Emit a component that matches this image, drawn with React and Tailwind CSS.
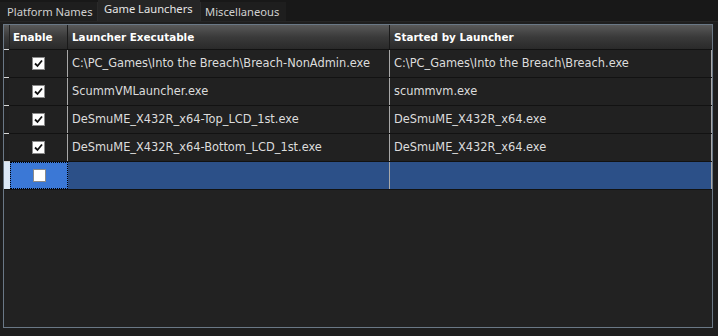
import React from "react";

const rows = [
  ["C:\\PC_Games\\Into the Breach\\Breach-NonAdmin.exe", "C:\\PC_Games\\Into the Breach\\Breach.exe"],
  ["ScummVMLauncher.exe", "scummvm.exe"],
  ["DeSmuME_X432R_x64-Top_LCD_1st.exe", "DeSmuME_X432R_x64.exe"],
  ["DeSmuME_X432R_x64-Bottom_LCD_1st.exe", "DeSmuME_X432R_x64.exe"],
];

function Check({ checked }) {
  return (
    <div className="w-[13px] h-[13px] bg-white border border-[#8a8a8a] flex items-center justify-center">
      {checked && (
        <svg width="9" height="9" viewBox="0 0 9 9">
          <path d="M1 4.5 L3.5 7 L8 1.5" stroke="#111" strokeWidth="1.8" fill="none" />
        </svg>
      )}
    </div>
  );
}

export default function App() {
  const font = { fontFamily: "'DejaVu Sans', Verdana, sans-serif" };
  return (
    <div className="w-[718px] h-[336px] bg-[#1b1b1b] overflow-hidden flex flex-col" style={font}>
      {/* Tabs */}
      <div className="h-[21px] flex items-end bg-[#181818] text-[11.2px] whitespace-nowrap" style={{ fontFamily: "'Noto Sans', sans-serif" }}>
        <div className="h-[19px] w-[98px] bg-[#1e1e1e] border-r border-[#2a2a2a] text-[#d0d0d0] pl-[7px] flex items-center leading-none">Platform Names</div>
        <div className="h-[21px] w-[102px] bg-[#252525] text-[#e6e6e6] pl-[6px] pb-[3px] flex items-center leading-none">Game Launchers</div>
        <div className="h-[19px] w-[86px] bg-[#1e1e1e] border-l border-[#2a2a2a] text-[#d0d0d0] pl-[4px] flex items-center leading-none">Miscellaneous</div>
      </div>
      {/* Panel */}
      <div className="flex-1 bg-[#1e1e1e] border-t border-[#262626] pt-[2px] pl-[3px] pr-[5px] pb-[8px] flex">
        <div className="flex-1 border border-[#6a7886] bg-[#222222] flex flex-col">
          {/* Header */}
          <div className="h-[24px] flex bg-gradient-to-b from-[#5a5a5a] via-[#3a3a3a] to-[#2a2a2a] text-white font-bold text-[10.4px] whitespace-nowrap">
            <div className="w-[6px] border-r border-[#222]" />
            <div className="w-[58px] border-r border-[#1a1a1a] flex items-center pl-[3px] pt-[2px]">Enable</div>
            <div className="w-[322px] border-r border-[#1a1a1a] flex items-center pl-[4px] pt-[2px]">Launcher Executable</div>
            <div className="flex-1 flex items-center pl-[4px] pt-[2px]">Started by Launcher</div>
          </div>
          {/* Rows */}
          {rows.map((r, i) => (
            <div key={i} className="h-[28px] flex text-[11.4px] text-[#dcdcdc] bg-[#212121] border-t border-[#121212]">
              <div className="w-[6px] border-r border-[#222] bg-[#202020] relative">
                <div className="absolute left-0 right-0 -top-px h-px bg-[#d8d8d8]" />
              </div>
              <div className="w-[58px] border-r border-[#a8a8a8] flex items-center justify-center">
                <Check checked />
              </div>
              <div className="w-[322px] border-r border-[#a8a8a8] flex items-center pl-[4px] whitespace-nowrap">{r[0]}</div>
              <div className="flex-1 flex items-center pl-[4px] whitespace-nowrap border-r border-[#a8a8a8]">{r[1]}</div>
            </div>
          ))}
          <div className="h-[28px] flex bg-[#2c5088] border-t border-[#121212]">
            <div className="w-[6px] bg-[#dce8f6] relative">
              <div className="absolute left-0 right-0 -top-px h-px bg-[#d8d8d8]" />
            </div>
            <div className="w-[58px] bg-[#3b78d6] border border-dotted border-black flex items-center justify-center">
              <Check />
            </div>
            <div className="w-[322px] border-r border-[#a8a8a8]" />
            <div className="flex-1 border-r border-[#a8a8a8]" />
          </div>
          <div className="flex-1 border-t border-[#121212]" />
        </div>
      </div>
    </div>
  );
}
